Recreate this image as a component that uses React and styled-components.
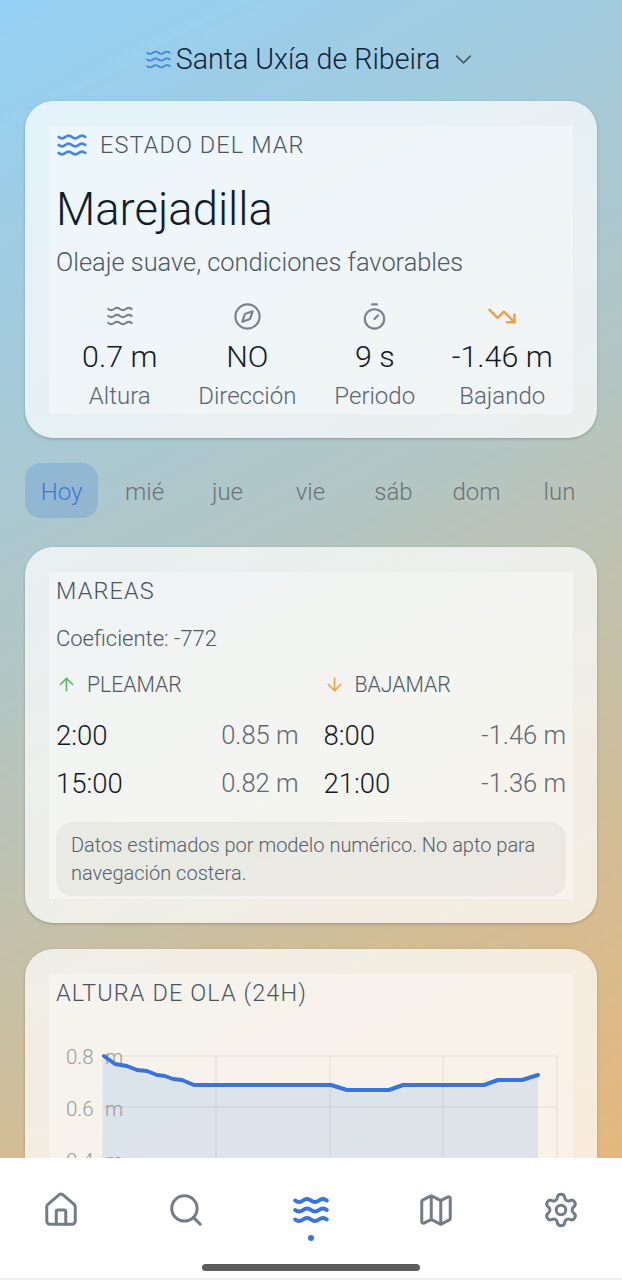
import styled, { createGlobalStyle } from "styled-components";
import {
  ArrowDown,
  ArrowUp,
  ChevronDown,
  Compass,
  House,
  Map as MapIcon,
  Search,
  Settings,
  Timer,
  TrendingDown,
  Waves,
} from "lucide-react";

const GlobalStyle = createGlobalStyle`
  html, body {
    margin: 0;
    padding: 0;
    background: #fff;
  }
  * {
    box-sizing: border-box;
  }
`;

const Phone = styled.div`
  width: 622px;
  height: 1280px;
  display: flex;
  flex-direction: column;
  overflow: hidden;
  font-family: Roboto, "Noto Sans", sans-serif;
  font-weight: 300;
  background: linear-gradient(152deg, #93d0f5 0%, #b3c6c4 43%, #d2bd95 72%, #e9b679 96%);
`;
const Scroller = styled.main`
  flex: 1;
  min-height: 0;
  overflow: hidden;
  padding: 36px 25px 0;
`;
const Location = styled.header`
  height: 46px;
  margin-bottom: 19px;
  display: flex;
  align-items: center;
  justify-content: center;
  gap: 4px;
  font-size: 28.6px;
  color: #12233a;
  svg {
    flex: none;
  }
`;
const LocationChevron = styled(ChevronDown)`
  margin-left: 6px;
  color: #4d5e6c;
`;
const Card = styled.section`
  padding: 25px 24px 24px;
  border-radius: 28px;
  background: rgba(255, 255, 255, 0.72);
  box-shadow: 0 1px 3px rgba(60, 50, 30, 0.3);
`;
const Inner = styled.div`
  padding: 0 7px;
  background: rgba(255, 255, 255, 0.35);
`;
const SectionHead = styled.h2`
  margin: 0;
  height: 36px;
  padding-top: 1px;
  display: flex;
  align-items: center;
  gap: 12px;
  font-size: 23.5px;
  font-weight: 300;
  letter-spacing: 1.1px;
  color: #4a5564;
`;
const HeadIcon = styled(Waves)`
  color: #4a85dc;
`;
const Title = styled.h1`
  margin: 22px 0 0;
  font-size: 45.4px;
  line-height: 52px;
  font-weight: 300;
  color: #111c2e;
`;
const Subtitle = styled.p`
  margin: 11px 0 0;
  font-size: 25.4px;
  line-height: 30px;
  color: #4d5867;
`;
const Stats = styled.div`
  margin-top: 25px;
  padding-bottom: 4px;
  display: grid;
  grid-template-columns: repeat(4, 1fr);
`;
const Stat = styled.div`
  display: flex;
  flex-direction: column;
  align-items: center;
`;
const StatIcon = styled.div`
  height: 28px;
  display: flex;
  align-items: center;
  justify-content: center;
  color: ${(p) => p.$color || "#7a828c"};
`;
const StatValue = styled.div`
  margin-top: 9px;
  font-size: 30.4px;
  line-height: 36px;
  color: #141b28;
`;
const StatLabel = styled.div`
  margin-top: 7px;
  font-size: 24px;
  line-height: 28px;
  color: #5a6472;
`;
const Days = styled.nav`
  margin: 25px 0 29px;
  display: grid;
  grid-template-columns: repeat(7, 73px);
  column-gap: 10px;
`;
const Day = styled.div`
  height: 55px;
  padding-top: 2px;
  border-radius: 16px;
  display: flex;
  align-items: center;
  justify-content: center;
  font-size: 24px;
  color: ${(p) => (p.$active ? "#3f78d6" : "#6b7473")};
  background: ${(p) => (p.$active ? "rgba(80, 135, 215, 0.28)" : "transparent")};
`;
const Coefficient = styled.p`
  margin: 17px 0 0;
  font-size: 22px;
  line-height: 28px;
  color: #4d5867;
`;
const Tides = styled.div`
  margin-top: 17px;
  display: grid;
  grid-template-columns: 1fr 1fr;
  column-gap: 25px;
`;
const TideHead = styled.div`
  height: 28px;
  margin-bottom: 13px;
  display: flex;
  align-items: center;
  gap: 10px;
  font-size: 21.2px;
  color: #4d5867;
  svg {
    color: ${(p) => p.$color};
  }
`;
const TideRow = styled.div`
  height: 48px;
  display: flex;
  align-items: center;
  justify-content: space-between;
`;
const TideTime = styled.span`
  font-size: 27.5px;
  color: #141b28;
`;
const TideValue = styled.span`
  font-size: 25.5px;
  color: #5f6874;
`;
const Note = styled.p`
  margin: 15px 0 0;
  padding: 9px 15px;
  height: 74px;
  border-radius: 16px;
  font-size: 20px;
  line-height: 28px;
  color: #565f6b;
  background: rgba(90, 80, 60, 0.06);
`;
const TideCard = styled(Card)`
  margin-bottom: 26px;
  ${Inner} {
    padding-bottom: 3px;
  }
`;
const Chart = styled.svg`
  display: block;
  width: 510px;
  height: 240px;
`;
const BottomNav = styled.footer`
  flex: none;
  position: relative;
  height: 122px;
  background: #fff;
  border-bottom: 2px solid #f0f0f0;
`;
const NavItems = styled.div`
  display: grid;
  grid-template-columns: repeat(5, 125px);
  justify-content: center;
  padding-top: 33px;
`;
const NavItem = styled.div`
  display: flex;
  flex-direction: column;
  align-items: center;
  color: ${(p) => (p.$active ? "#3a74d8" : "#737c88")};
`;
const NavIcon = styled.div`
  height: 38px;
  display: flex;
  align-items: center;
  justify-content: center;
`;
const ActiveDot = styled.span`
  width: 6px;
  height: 6px;
  margin-top: 6px;
  border-radius: 50%;
  background: #3a74d8;
`;
const HomeBar = styled.div`
  position: absolute;
  left: 202px;
  bottom: 7px;
  width: 218px;
  height: 7px;
  border-radius: 4px;
  background: #5c5c5c;
`;

const stats = [
  { icon: <Waves size={28} strokeWidth={1.9} />, value: "0.7 m", label: "Altura" },
  { icon: <Compass size={29} strokeWidth={1.8} />, value: "NO", label: "Dirección" },
  { icon: <Timer size={29} strokeWidth={1.8} />, value: "9 s", label: "Periodo" },
  {
    icon: <TrendingDown size={30} strokeWidth={2} />,
    value: "-1.46 m",
    label: "Bajando",
    color: "#eba24a",
  },
];

const days = ["Hoy", "mié", "jue", "vie", "sáb", "dom", "lun"];

const pleamar = [
  ["2:00", "0.85 m"],
  ["15:00", "0.82 m"],
];
const bajamar = [
  ["8:00", "-1.46 m"],
  ["21:00", "-1.36 m"],
];

// chart coordinates are relative to the svg box (x - 56, y - 1011)
const wave = [
  [48, 46], [59, 54], [71, 56], [81, 60], [91, 61], [101, 65], [109, 66], [117, 69],
  [126, 70], [138, 75], [275, 75], [291, 80], [333, 80], [347, 75], [428, 75], [442, 70],
  [466, 70], [482, 65],
];
const linePoints = wave.map((p) => p.join(",")).join(" ");
const areaPoints = `47,240 ${linePoints} 482,240`;

function WaveChart() {
  return (
    <Chart viewBox="0 0 510 240">
      <polygon points={areaPoints} fill="rgba(60, 141, 234, 0.15)" />
      {[47, 160, 274, 387, 501].map((x) => (
        <line key={x} x1={x} x2={x} y1="46" y2="240" stroke="rgba(90, 90, 100, 0.13)" strokeWidth="1" />
      ))}
      {[46, 97, 149].map((y) => (
        <line key={y} x1="47" x2="501" y1={y} y2={y} stroke="rgba(90, 90, 100, 0.13)" strokeWidth="1" />
      ))}
      {[
        ["0.8", 54],
        ["0.6", 106],
        ["0.4", 158],
      ].map(([t, y]) => (
        <text key={t} y={y} fontSize="20.5" fill="#9b9b98" fontFamily="Roboto, sans-serif" fontWeight="300">
          <tspan x="10">{t}</tspan>
          <tspan x="49">m</tspan>
        </text>
      ))}
      <polyline points={linePoints} fill="none" stroke="#3a74d8" strokeWidth="4" strokeLinejoin="round" strokeLinecap="round" />
    </Chart>
  );
}

export default function App() {
  return (
    <>
      <GlobalStyle />
      <Phone>
        <Scroller>
          <Location>
            <Waves size={27} strokeWidth={1.7} color="#4a85dc" />
            Santa Uxía de Ribeira
            <LocationChevron size={27} strokeWidth={1.6} />
          </Location>

          <Card>
            <Inner>
              <SectionHead>
                <HeadIcon size={32} strokeWidth={2} />
                ESTADO DEL MAR
              </SectionHead>
              <Title>Marejadilla</Title>
              <Subtitle>Oleaje suave, condiciones favorables</Subtitle>
              <Stats>
                {stats.map((s) => (
                  <Stat key={s.label}>
                    <StatIcon $color={s.color}>{s.icon}</StatIcon>
                    <StatValue>{s.value}</StatValue>
                    <StatLabel>{s.label}</StatLabel>
                  </Stat>
                ))}
              </Stats>
            </Inner>
          </Card>

          <Days>
            {days.map((d, i) => (
              <Day key={d} $active={i === 0}>
                {d}
              </Day>
            ))}
          </Days>

          <TideCard>
            <Inner>
              <SectionHead>MAREAS</SectionHead>
              <Coefficient>Coeficiente: -772</Coefficient>
              <Tides>
                <div>
                  <TideHead $color="#5cb870">
                    <ArrowUp size={21} strokeWidth={1.9} />
                    PLEAMAR
                  </TideHead>
                  {pleamar.map(([time, value]) => (
                    <TideRow key={time}>
                      <TideTime>{time}</TideTime>
                      <TideValue>{value}</TideValue>
                    </TideRow>
                  ))}
                </div>
                <div>
                  <TideHead $color="#eba24a">
                    <ArrowDown size={21} strokeWidth={1.9} />
                    BAJAMAR
                  </TideHead>
                  {bajamar.map(([time, value]) => (
                    <TideRow key={time}>
                      <TideTime>{time}</TideTime>
                      <TideValue>{value}</TideValue>
                    </TideRow>
                  ))}
                </div>
              </Tides>
              <Note>Datos estimados por modelo numérico. No apto para navegación costera.</Note>
            </Inner>
          </TideCard>

          <Card>
            <Inner>
              <SectionHead>ALTURA DE OLA (24H)</SectionHead>
              <WaveChart />
            </Inner>
          </Card>
        </Scroller>

        <BottomNav>
          <NavItems>
            <NavItem>
              <NavIcon>
                <House size={38} strokeWidth={1.9} />
              </NavIcon>
            </NavItem>
            <NavItem>
              <NavIcon>
                <Search size={38} strokeWidth={1.9} />
              </NavIcon>
            </NavItem>
            <NavItem $active>
              <NavIcon>
                <Waves size={38} strokeWidth={2.5} />
              </NavIcon>
              <ActiveDot />
            </NavItem>
            <NavItem>
              <NavIcon>
                <MapIcon size={38} strokeWidth={1.9} />
              </NavIcon>
            </NavItem>
            <NavItem>
              <NavIcon>
                <Settings size={38} strokeWidth={1.9} />
              </NavIcon>
            </NavItem>
          </NavItems>
          <HomeBar />
        </BottomNav>
      </Phone>
    </>
  );
}
